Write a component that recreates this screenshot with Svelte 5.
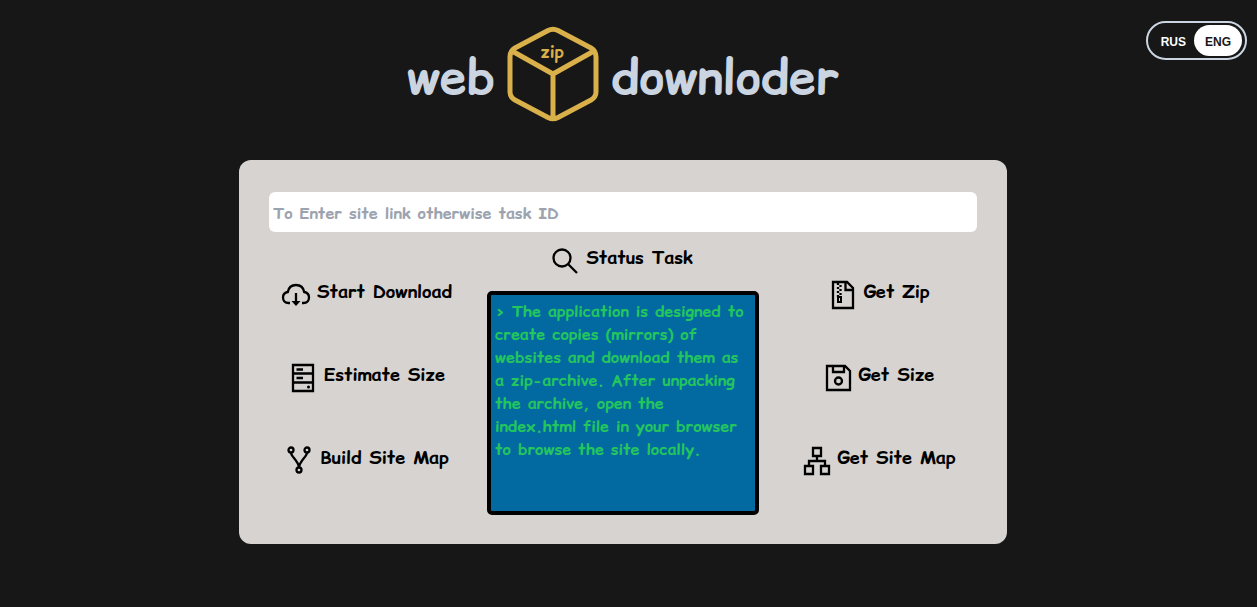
<script>
  let link = $state('');
  let language = $state('ENG');
  const languages = ['RUS', 'ENG'];
  const startActions = [
    { label: 'Start Download', icon: 'cloud' },
    { label: 'Estimate Size', icon: 'server' },
    { label: 'Build Site Map', icon: 'fork' }
  ];
  const getActions = [
    { label: 'Get Zip', icon: 'zip' },
    { label: 'Get Size', icon: 'disk' },
    { label: 'Get Site Map', icon: 'tree' }
  ];
</script>

{#snippet icon(name)}
  <svg class="icon" viewBox="0 0 32 32" aria-hidden="true">
    {#if name === 'cloud'}
      <path d="M10 24H8.500C5 24 3 21.500 3 18.500C3 15.500 5 13.500 7.800 13C8.600 8.500 12 6 16 6S23.400 8.500 24.200 13C27 13.500 29 15.500 29 18.500C29 21.500 27 24 23.500 24H22" />
      <path d="M16 14V24" />
      <path class="solid" d="M11.500 22H20.500L16 27Z" />
    {:else if name === 'server'}
      <path d="M6 3H26V29H6ZM6 11.500H26M6 20.500H26M9.500 7.500H16M9.500 16H16" />
      <circle class="solid" cx="21.500" cy="25" r="1.500" />
    {:else if name === 'fork'}
      <circle cx="8" cy="5" r="2.500" /><circle cx="24" cy="5" r="2.500" /><circle cx="16" cy="25" r="2.500" />
      <path d="M8 7.500C8 12 15 15 16 22.500C17 15 24 12 24 7.500" />
    {:else if name === 'search'}
      <circle cx="13" cy="13" r="8.500" /><path d="M19 19L28 28" />
    {:else if name === 'zip'}
      <path d="M6 3H20L26 9V29H6ZM18.500 3V11H26" />
      <path class="zipper" d="M11 4V18M13.500 6V18" />
      <path class="thin" d="M11 18H14V23H11Z" />
    {:else if name === 'disk'}
      <path d="M5 4H23L28 9V28H5ZM11 4V10H22V4" /><circle cx="16.500" cy="19" r="3.500" />
    {:else}
      <path d="M12 3H20V11H12ZM4 21H12V29H4ZM20 21H28V29H20ZM16 11V16M8 21V16H24V21" />
    {/if}
  </svg>
{/snippet}

{#snippet action(item)}
  <button class="action" type="button">{@render icon(item.icon)}<span>{item.label}</span></button>
{/snippet}

<div class="page">
  <div class="languages" role="group" aria-label="Language">
    {#each languages as code}
      <button type="button" class:active={language === code} aria-pressed={language === code} onclick={() => (language = code)}>{code}</button>
    {/each}
  </div>

  <header>
    <h1>
      <span>web</span>
      <svg class="box" viewBox="0 0 96 96">
        <path d="M43 4.500Q48 2 53 4.500L86 22Q91 25 91 31V66Q91 71 86 74L53 91.500Q48 94 43 91.500L10 74Q5 71 5 66V31Q5 25 10 22ZM7 25L48 48L89 25M48 48V92" />
        <text x="47" y="32" text-anchor="middle">zip</text>
      </svg>
      <span>downloder</span>
    </h1>
  </header>

  <main>
    <input type="text" aria-label="Site link or task ID" placeholder="To Enter site link otherwise task ID" bind:value={link} />
    <div class="columns">
      <div class="side">
        {#each startActions as item}{@render action(item)}{/each}
      </div>
      <div class="center">
        <div class="status">{@render action({ label: 'Status Task', icon: 'search' })}</div>
        <p class="terminal">&gt; The application is designed to create copies (mirrors) of websites and download them as a zip-archive. After unpacking the archive, open the index.html file in your browser to browse the site locally.</p>
      </div>
      <div class="side results">
        {#each getActions as item}{@render action(item)}{/each}
      </div>
    </div>
  </main>
</div>

<style>
  :global(body) {
    margin: 0;
    background: #171717;
  }
  .page {
    box-sizing: border-box;
    min-height: 100vh;
    padding: 24px 11px 24px 0;
    font-family: "Comic Relief", "Comic Neue", "Noto Sans", sans-serif;
    font-weight: 700;
  }
  .languages {
    position: absolute;
    top: 21px;
    right: 10px;
    display: flex;
    padding: 2px 3px;
    border: 2px solid #cbd5e1;
    border-radius: 20px;
  }
  .languages button {
    height: 31px;
    padding: 2px 11px 0;
    border: 0;
    border-radius: 16px;
    background: transparent;
    color: #fff;
    font: bold 12px "Liberation Sans", sans-serif;
    cursor: pointer;
  }
  .languages button:first-child {
    padding: 2px 8px 0 10px;
  }
  .languages .active {
    background: #fff;
    color: #171717;
  }
  h1 {
    display: flex;
    align-items: center;
    justify-content: center;
    gap: 10px;
    height: 100px;
    margin: 0;
    color: #cbd5e1;
    font-size: 48px;
    line-height: 60px;
    font-weight: 700;
  }
  h1 span {
    padding-top: 6px;
  }
  .box {
    width: 96px;
    height: 96px;
    fill: none;
    stroke: #d9b04a;
    stroke-width: 5;
    stroke-linejoin: round;
  }
  .box text {
    fill: #d9b04a;
    stroke: none;
    font-size: 17px;
  }
  main {
    box-sizing: border-box;
    max-width: 768px;
    margin: 36px auto 0;
    padding: 32px 30px 29px;
    border-radius: 12px;
    background: #d6d3d1;
  }
  input {
    box-sizing: border-box;
    display: block;
    width: 100%;
    height: 40px;
    padding: 2px 4px 0;
    border: 0;
    border-radius: 6px;
    background: #fff;
    color: #171717;
    font: inherit;
    font-size: 16px;
  }
  input::placeholder {
    color: #9ca3af;
    opacity: 1;
  }
  .columns {
    display: grid;
    grid-template-columns: 1fr 272px 1fr;
    column-gap: 24px;
    padding-top: 13px;
  }
  .side {
    display: flex;
    flex-direction: column;
    align-items: center;
    gap: 51px;
    padding-top: 34px;
  }
  .center {
    display: flex;
    flex-direction: column;
    align-items: center;
    gap: 14px;
  }
  .status,
  .results {
    padding-right: 4px;
  }
  .action {
    display: flex;
    gap: 5px;
    padding: 0;
    border: 0;
    background: none;
    color: #000;
    font: inherit;
    font-size: 18px;
    line-height: 26px;
    white-space: nowrap;
    cursor: pointer;
  }
  .icon {
    flex: none;
    width: 32px;
    height: 32px;
    fill: none;
    stroke: #000;
    stroke-width: 2.3;
  }
  .icon .solid {
    fill: #000;
    stroke: none;
  }
  .icon .zipper {
    stroke-dasharray: 2 2;
  }
  .icon .thin {
    stroke-width: 2;
  }
  .terminal {
    box-sizing: border-box;
    width: 100%;
    min-height: 224px;
    margin: 0;
    padding: 5px 8px 5px 4px;
    border: 4px solid #000;
    border-radius: 5px;
    background: #0369a1;
    color: #22c55e;
    font-size: 16px;
    line-height: 23px;
  }
</style>
